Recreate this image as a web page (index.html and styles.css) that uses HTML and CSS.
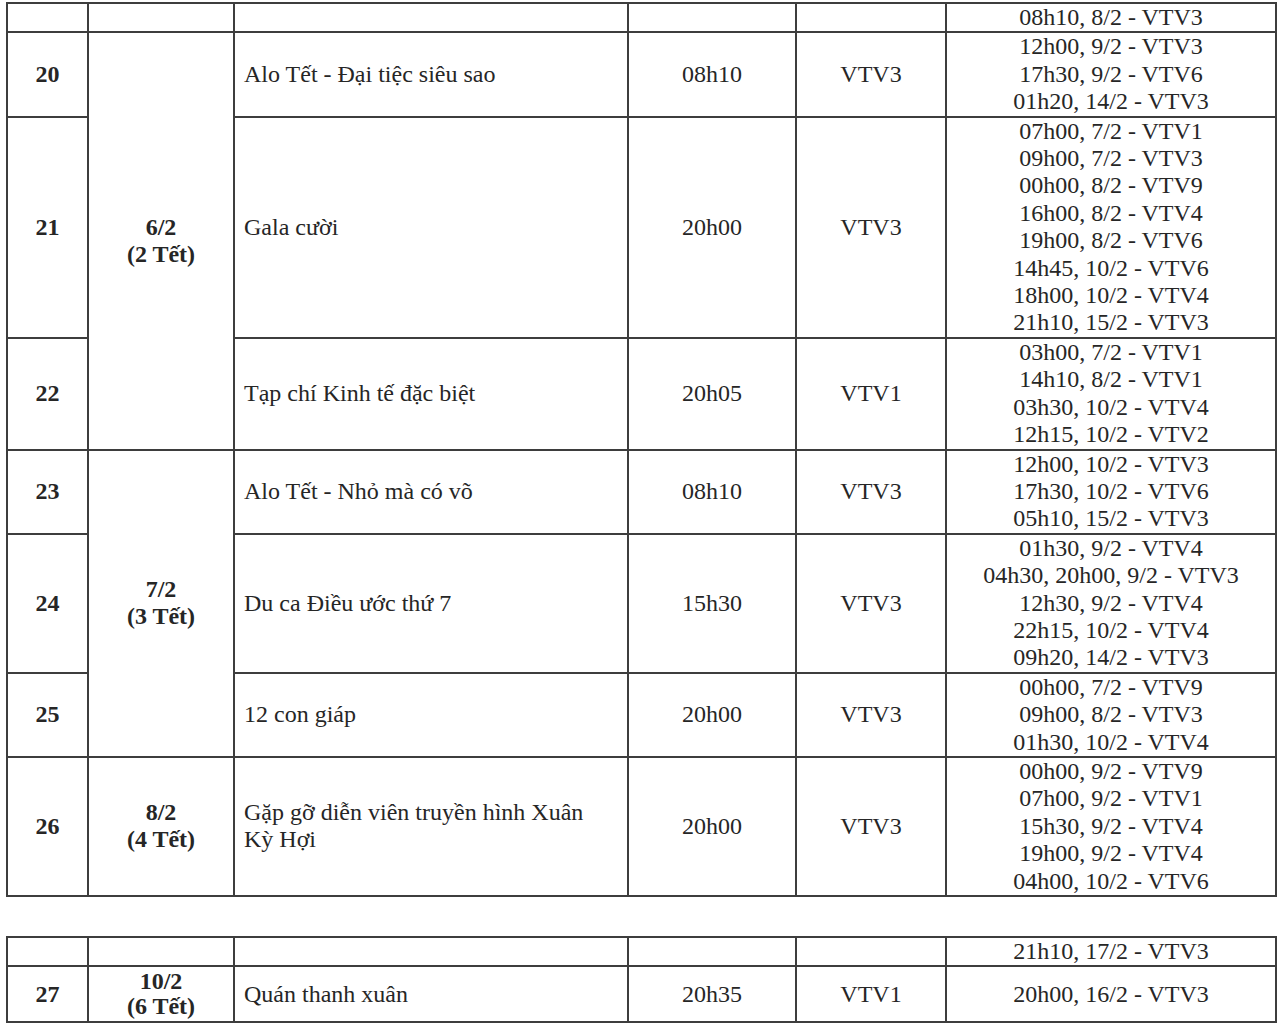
FILE: index.html
```html
<!DOCTYPE html>
<html lang="vi">
<head>
<meta charset="utf-8">
<title>Lịch phát sóng Tết</title>
<link rel="stylesheet" href="styles.css">
</head>
<body>
<table class="sched">
  <colgroup>
    <col class="c-no"><col class="c-date"><col class="c-name"><col class="c-time"><col class="c-ch"><col class="c-re">
  </colgroup>
  <tbody>
    <tr>
      <td class="no"></td><td class="date"></td><td class="name"></td><td class="time"></td><td class="ch"></td>
      <td class="re">08h10, 8/2 - VTV3</td>
    </tr>
    <tr>
      <td class="no">20</td>
      <td class="date" rowspan="3">6/2<br>(2 Tết)</td>
      <td class="name">Alo Tết - Đại tiệc siêu sao</td>
      <td class="time">08h10</td>
      <td class="ch">VTV3</td>
      <td class="re">12h00, 9/2 - VTV3<br>17h30, 9/2 - VTV6<br>01h20, 14/2 - VTV3</td>
    </tr>
    <tr>
      <td class="no">21</td>
      <td class="name">Gala cười</td>
      <td class="time">20h00</td>
      <td class="ch">VTV3</td>
      <td class="re">07h00, 7/2 - VTV1<br>09h00, 7/2 - VTV3<br>00h00, 8/2 - VTV9<br>16h00, 8/2 - VTV4<br>19h00, 8/2 - VTV6<br>14h45, 10/2 - VTV6<br>18h00, 10/2 - VTV4<br>21h10, 15/2 - VTV3</td>
    </tr>
    <tr>
      <td class="no">22</td>
      <td class="name">Tạp chí Kinh tế đặc biệt</td>
      <td class="time">20h05</td>
      <td class="ch">VTV1</td>
      <td class="re">03h00, 7/2 - VTV1<br>14h10, 8/2 - VTV1<br>03h30, 10/2 - VTV4<br>12h15, 10/2 - VTV2</td>
    </tr>
    <tr>
      <td class="no">23</td>
      <td class="date" rowspan="3">7/2<br>(3 Tết)</td>
      <td class="name">Alo Tết - Nhỏ mà có võ</td>
      <td class="time">08h10</td>
      <td class="ch">VTV3</td>
      <td class="re">12h00, 10/2 - VTV3<br>17h30, 10/2 - VTV6<br>05h10, 15/2 - VTV3</td>
    </tr>
    <tr>
      <td class="no">24</td>
      <td class="name">Du ca Điều ước thứ 7</td>
      <td class="time">15h30</td>
      <td class="ch">VTV3</td>
      <td class="re">01h30, 9/2 - VTV4<br>04h30, 20h00, 9/2 - VTV3<br>12h30, 9/2 - VTV4<br>22h15, 10/2 - VTV4<br>09h20, 14/2 - VTV3</td>
    </tr>
    <tr>
      <td class="no">25</td>
      <td class="name">12 con giáp</td>
      <td class="time">20h00</td>
      <td class="ch">VTV3</td>
      <td class="re">00h00, 7/2 - VTV9<br>09h00, 8/2 - VTV3<br>01h30, 10/2 - VTV4</td>
    </tr>
    <tr>
      <td class="no">26</td>
      <td class="date">8/2<br>(4 Tết)</td>
      <td class="name">Gặp gỡ diễn viên truyền hình Xuân<br>Kỳ Hợi</td>
      <td class="time">20h00</td>
      <td class="ch">VTV3</td>
      <td class="re">00h00, 9/2 - VTV9<br>07h00, 9/2 - VTV1<br>15h30, 9/2 - VTV4<br>19h00, 9/2 - VTV4<br>04h00, 10/2 - VTV6</td>
    </tr>
  </tbody>
</table>

<table class="sched sched-next">
  <colgroup>
    <col class="c-no"><col class="c-date"><col class="c-name"><col class="c-time"><col class="c-ch"><col class="c-re">
  </colgroup>
  <tbody>
    <tr>
      <td class="no"></td><td class="date"></td><td class="name"></td><td class="time"></td><td class="ch"></td>
      <td class="re">21h10, 17/2 - VTV3</td>
    </tr>
    <tr class="tall">
      <td class="no">27</td>
      <td class="date">10/2<br>(6 Tết)</td>
      <td class="name">Quán thanh xuân</td>
      <td class="time">20h35</td>
      <td class="ch">VTV1</td>
      <td class="re">20h00, 16/2 - VTV3</td>
    </tr>
  </tbody>
</table>
</body>
</html>
```

FILE: styles.css
```css
html, body {
  margin: 0;
  background: #ffffff;
}

body {
  padding: 2px 0 0 6px;
  font-family: "Liberation Serif", "Times New Roman", serif;
  font-size: 24px;
  line-height: 27.4px;
  color: #262626;
}

.sched {
  width: 1271px;
  border-collapse: collapse;
  table-layout: fixed;
}

.sched-next {
  margin-top: 39px;
}

.c-no { width: 81px; }
.c-date { width: 146px; }
.c-name { width: 394px; }
.c-time { width: 168px; }
.c-ch { width: 150px; }
.c-re { width: 330px; }

.sched td {
  border: 2px solid #3d3d3d;
  padding: 0;
  vertical-align: middle;
  text-align: center;
  height: 27.4px;
}

.sched td.no,
.sched td.date {
  font-weight: bold;
}

.sched td.name {
  text-align: left;
  padding-left: 9px;
}

.sched tr.tall td {
  height: 54px;
}

.sched tr.tall td.date {
  line-height: 25px;
}
```
